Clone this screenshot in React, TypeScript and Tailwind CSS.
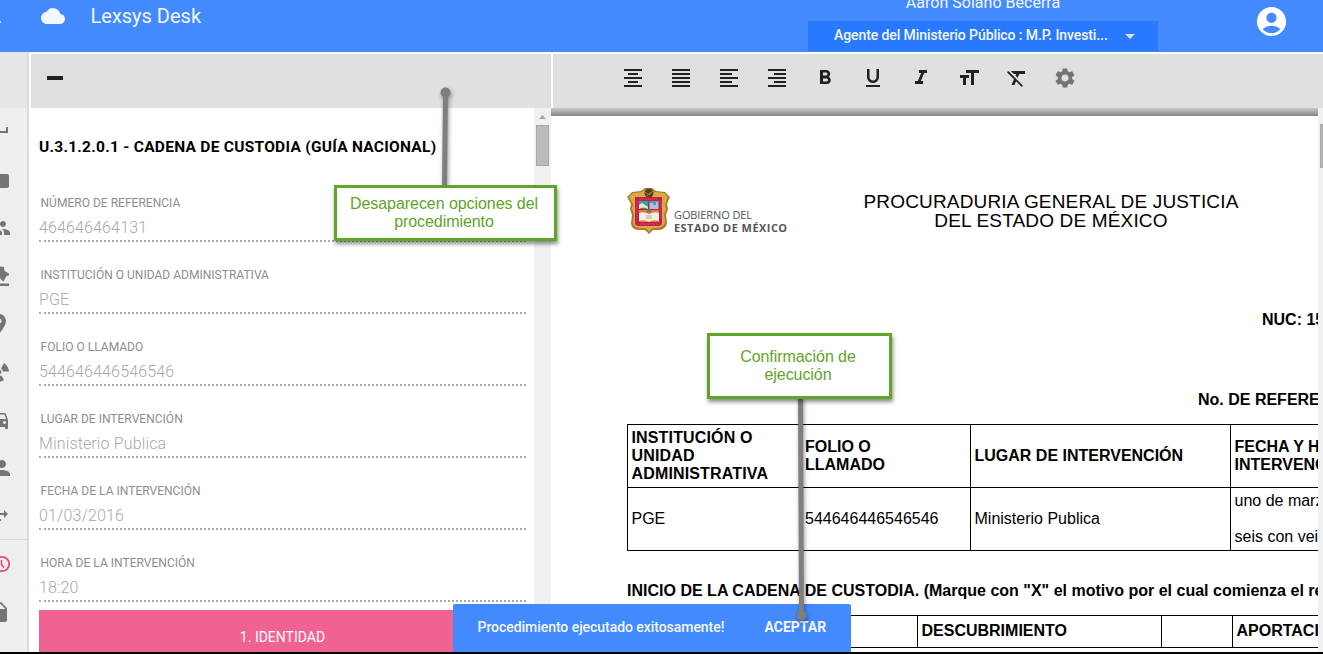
import React from "react";
import {
  MdAccountCircle, MdArrowDropDown, MdCloud, MdFormatAlignCenter, MdFormatAlignJustify, MdFormatAlignLeft,
  MdFormatAlignRight, MdFormatBold, MdFormatClear, MdFormatItalic, MdFormatSize, MdFormatUnderlined, MdSettings,
  MdPeople, MdPlace, MdDirectionsCar, MdPerson, MdSwapHoriz, MdInsertDriveFile, MdSpaceBar,
} from "react-icons/md";

const fields = [
  ["NÚMERO DE REFERENCIA", "464646464131"],
  ["INSTITUCIÓN O UNIDAD ADMINISTRATIVA", "PGE"],
  ["FOLIO O LLAMADO", "544646446546546"],
  ["LUGAR DE INTERVENCIÓN", "Ministerio Publica"],
  ["FECHA DE LA INTERVENCIÓN", "01/03/2016"],
  ["HORA DE LA INTERVENCIÓN", "18:20"],
];

const tools = [
  MdFormatAlignCenter, MdFormatAlignJustify, MdFormatAlignLeft, MdFormatAlignRight, MdFormatBold,
  MdFormatUnderlined, MdFormatItalic, MdFormatSize, MdFormatClear,
];

function Header() {
  return (
    <header className="flex h-[52px] shrink-0 overflow-hidden bg-[#448aff] text-[#f3f7ff]">
      <div className="flex w-[808px] items-start">
        <span className="mt-[21px] h-[2px] w-px bg-white/70" />
        <MdCloud className="ml-[40px] mt-[4px] size-[24px]" />
        <h1 className="ml-[25.5px] mt-[2px] text-[20px] leading-[28px]">Lexsys Desk</h1>
      </div>
      <div className="w-[350px]">
        <p className="-mt-[8px] h-[29px] text-center text-[16px] leading-[22px] tracking-[0.02px]">Aaron Solano Becerra</p>
        <div className="flex h-[30px] items-center bg-[#2979ff] pl-[26px] text-[14px] font-medium">
          <span className="-mt-[2px] w-[284px] whitespace-nowrap tracking-[-0.09px]">Agente del Ministerio Público : M.P. Investi...</span>
          <MdArrowDropDown className="size-[24px] text-[#dfe0e2]" />
        </div>
      </div>
      <MdAccountCircle className="ml-[96px] mt-[4px] size-[35px] text-white" />
    </header>
  );
}

function StampIcon() {
  return (
    <svg className="size-[24px]" viewBox="0 0 24 24" fill="currentColor">
      <path d="M4 19.500H22V22H4ZM13 2.500 17 3 17.500 7 22 9.500 22 11.500 19.500 12 16.500 17.500 14.500 16 13 14 8 17V8Z" />
    </svg>
  );
}

function RadialIcon() {
  return (
    <svg className="size-[24px]" viewBox="0 0 24 24" fill="currentColor">
      <circle cx="12.500" cy="12" r="2" />
      <path d="M17 3Q21.500 6 22 11.500H16Q15.700 9.500 14 8.500ZM14.500 15.500 17 20Q14 22 11 22L12.500 16Z" />
    </svg>
  );
}

function ClockIcon() {
  return (
    <svg className="size-[24px]" viewBox="0 0 24 24" fill="none" stroke="currentColor">
      <circle cx="15" cy="12" r="7.200" strokeWidth="1.800" />
      <path d="M14.500 8V12.500L17 15.500" strokeWidth="1.500" />
    </svg>
  );
}

function Sidebar() {
  return (
    <aside className="w-[29px] shrink-0 overflow-hidden border-r-2 border-[#dcdcdc] bg-[#eeeeee] text-[#757575]">
      <div className="h-[56px] w-[29px] bg-[#e7e7e7]" />
      <div className="-ml-[13px] flex w-[40px] flex-col">
        <div className="h-[48px] pl-[1px] pt-[10px]"><MdSpaceBar className="size-[24px]" /></div>
        <div className="h-[48px] pt-[18px]"><div className="h-[14px] w-[22px] rounded-[2px] bg-[#757575]" /></div>
        <div className="h-[48px] pt-[12px]"><MdPeople className="size-[24px]" /></div>
        <div className="h-[48px] pt-[12px]"><StampIcon /></div>
        <div className="h-[48px] pt-[12px]"><MdPlace className="size-[24px]" /></div>
        <div className="h-[48px] pt-[12px]"><RadialIcon /></div>
        <div className="h-[48px] pt-[12px]"><MdDirectionsCar className="size-[24px]" /></div>
        <div className="h-[48px] pl-[3px] pt-[12px]"><MdPerson className="size-[24px]" /></div>
        <div className="h-[48px] border-b border-[#dcdcdc] pt-[13px]"><MdSwapHoriz className="size-[24px]" /></div>
        <div className="h-[48px] pt-[12px] text-[#f0437f]"><ClockIcon /></div>
        <div className="h-[48px] pt-[12px]"><MdInsertDriveFile className="size-[24px]" /></div>
      </div>
    </aside>
  );
}

function FormPanel() {
  return (
    <section className="flex w-[522px] shrink-0 flex-col">
      <div className="ml-[2px] mt-[2px] h-[54px] shrink-0 bg-[#e0e0e0] pl-[16px] pt-[22px]">
        <div className="h-[4px] w-[16px] bg-[#212121]" />
      </div>
      <div className="flex min-h-0 flex-1 overflow-hidden">
        <div className="w-[505px] pl-[10px]">
          <h2 className="h-[86px] whitespace-nowrap pt-[29px] text-[15.500px] font-bold leading-[20px] tracking-[0.27px] text-black">
            U.3.1.2.0.1 - CADENA DE CUSTODIA (GUÍA NACIONAL)
          </h2>
          {fields.map(([label, value]) => (
            <div key={label} className="h-[72px] w-[487px]">
              <div className="h-[48px] border-b-2 border-dotted border-[#a9a9a9]">
                <div className="pl-[1.5px] pt-[1px] text-[12px] leading-[16px] tracking-[0.02px] text-[#8e8e8e]">{label}</div>
                <div className="pt-[7px] text-[16px] font-light leading-[20px] tracking-[0.14px] text-[#a8a8a8]">{value}</div>
              </div>
            </div>
          ))}
          <div className="-mt-[16px] h-[60px] w-[487px] bg-[#f06292] pt-[17px] text-center text-[14px] leading-[20px] text-white">
            1. IDENTIDAD
          </div>
        </div>
        <div className="flex w-[17px] flex-col items-center bg-[#f1f1f1]">
          <svg className="mt-[7px] h-[4px] w-[7px] shrink-0" viewBox="0 0 7 4"><path d="M3.5 0 7 4H0Z" fill="#a3a3a3" /></svg>
          <div className="mt-[6px] h-[41px] w-[13px] border border-[#a8a8a8] bg-[#bcbcbc]" />
        </div>
      </div>
    </section>
  );
}

function Crest() {
  return (
    <svg className="h-[48px] w-[44px]" viewBox="0 0 44 48">
      <path d="M0 10 5 5 14 4 18 1H25L29 4 38 5 43 10 40 17 41 22 39 28 40 36Q39 42 32 43H26L22 47 18 43H11Q4 42 4 36L5 28 3 22 4 17Z" fill="#a87b28" />
      <path d="M2 10 6 6 15 5 19 2H24L28 5 37 6 41 10 38 17 39 22 37 28 38 35Q37 40 31 41H25L22 45 19 41H12Q6 40 6 35L7 28 5 22 6 17Z" fill="#d9ab48" />
      <path d="M8 10H35V36Q35 39 31 39H12Q8 39 8 36Z" fill="#c91f46" />
      <circle cx="22" cy="6" r="4.5" fill="#54401c" />
      <path d="M18 5 22 8 26 4M20 9 24 5" stroke="#a08446" fill="none" />
      <path d="M12 14H21V22H12Z" fill="#39a0a8" /><path d="M22 14H32V22H22Z" fill="#5d93b5" />
      <path d="M12 22V18L15 16 21 20V22Z" fill="#e6ecd0" /><path d="M12 22Q16 19 21 22Z" fill="#3d9b42" />
      <path d="M23 22V16H26V18H29V15H31V22Z" fill="#a9c4d4" />
      <path d="M12 23H32V35H12Z" fill="#e27c36" />
      <path d="M12 26Q17 24 22 27 27 24 32 26V34Q26 32 22 35 17 32 12 34Z" fill="#f4efe4" />
      <path d="M19 29H25M19 31H25" stroke="#d7a45c" />
      <circle cx="22" cy="24" r="2" fill="#4386a0" />
      <path d="M13 37H31M10 14V32M34 14V32M13 12H31" stroke="#d84a5e" strokeDasharray="1 1" />
    </svg>
  );
}

function DocumentPanel() {
  return (
    <section className="flex w-[772px] shrink-0 flex-col">
      <div className="ml-[2px] mt-[2px] flex h-[54px] shrink-0 bg-[#e0e0e0] pl-[68.400px] pt-[12px] text-[#212121]">
        {tools.map((Icon, i) => (
          <div key={i} className="w-[48px]"><Icon className="size-[24px]" /></div>
        ))}
        <MdSettings className="size-[24px] text-[#757575]" />
      </div>
      <div className="flex flex-1 overflow-hidden">
        <div className="w-[767px] overflow-hidden font-['Liberation_Sans'] text-[16px] leading-[18px] text-black">
          <div className="h-[8px] bg-linear-to-b from-[#cacaca] to-[#868686]" />
          <div className="flex h-[184px] pl-[76px]">
            <div className="flex w-[207px] pt-[71px]">
              <Crest />
              <div className="ml-[3px] mt-[22px] flex flex-col gap-px whitespace-nowrap font-['Open_Sans'] text-[11px] leading-[12px] text-[#555]">
                <div className="tracking-[-0.1px]">GOBIERNO DEL</div>
                <div className="font-bold tracking-[0.45px]">ESTADO DE MÉXICO</div>
              </div>
            </div>
            <div className="w-[434px] pt-[76px] text-center text-[19px] leading-[19px] tracking-[0.16px]">
              <div className="whitespace-nowrap">PROCURADURIA GENERAL DE JUSTICIA</div>
              <div className="whitespace-nowrap">DEL ESTADO DE MÉXICO</div>
            </div>
          </div>
          <div className="h-[80px] whitespace-nowrap pl-[711px] pt-[11px] font-bold">NUC: 15</div>
          <div className="h-[44px] whitespace-nowrap pl-[647px] pt-[11px] font-bold">No. DE REFERENCIA</div>
          <div className="ml-[76px] grid w-[900px] grid-cols-[174px_169px_260px_296px] grid-rows-[63px_63px] border-l border-t border-black *:flex *:items-center *:border-b *:border-r *:border-black *:pl-[3.500px]">
            <div className="font-bold tracking-[0.15px]">INSTITUCIÓN O<br />UNIDAD<br />ADMINISTRATIVA</div>
            <div className="whitespace-nowrap font-bold"><span className="-ml-[0.5px]">FOLIO O<br />LLAMADO</span></div>
            <div className="whitespace-nowrap font-bold">LUGAR DE INTERVENCIÓN</div>
            <div className="whitespace-nowrap font-bold">FECHA Y HORA<br />INTERVENCIÓN</div>
            <div>PGE</div>
            <div><span className="-ml-[0.5px]">544646446546546</span></div>
            <div>Ministerio Publica</div>
            <div className="whitespace-nowrap">uno de marzo<br /><br />seis con veinte</div>
          </div>
          <p className="ml-[76px] h-[64px] whitespace-nowrap pt-[31px] font-bold tracking-[0.01px]">INICIO DE LA CADENA DE CUSTODIA. (Marque con "X" el motivo por el cual comienza el registro</p>
          <div className="ml-[76px] grid h-[33px] w-[900px] grid-cols-[290px_244px_71px_295px] border-l border-t border-black font-bold *:flex *:items-center *:border-b *:border-r *:border-black *:pb-[2px] *:pl-[3.500px]">
            <div /><div>DESCUBRIMIENTO</div><div /><div>APORTACIÓN</div>
          </div>
        </div>
        <div className="w-[5px] bg-[#f1f1f1] pl-[2px] pt-[16px]">
          <div className="h-[44px] border border-[#a8a8a8] bg-[#bcbcbc]" />
        </div>
      </div>
    </section>
  );
}

const callout =
  "absolute flex flex-col items-center border-[3px] border-[#5fa527] bg-white pr-[3px] text-center font-['Liberation_Sans'] text-[16px] leading-[18px] tracking-[-0.06px] text-[#5fa527] shadow-[1px_3px_4px_rgba(0,0,0,0.45)]";

export default function App() {
  return (
    <main className="relative flex h-[654px] w-[1323px] flex-col overflow-hidden bg-white font-['Roboto',sans-serif]">
      <Header />
      <div className="flex h-[600px] overflow-hidden">
        <Sidebar />
        <FormPanel />
        <DocumentPanel />
      </div>
      <div className="h-[2px] bg-black" />
      <div className="absolute left-[453px] top-[604px] flex h-[48px] w-[398px] items-center rounded-t-[2px] bg-[#448aff] pb-[2px] pl-[24.5px] text-[14px] font-medium text-[#f3f7ff]">
        <span className="w-[287px] whitespace-nowrap tracking-[-0.05px]">Procedimiento ejecutado exitosamente!</span>
        <span className="font-bold">ACEPTAR</span>
      </div>
      <svg className="absolute left-0 top-0 h-[654px] w-[1323px] drop-shadow-[1px_2px_2px_rgba(0,0,0,0.4)]" viewBox="0 0 1323 654">
        <path d="M445.5 92 444.5 188M800.5 397 801.5 616" stroke="#7f7f7f" strokeWidth="5" />
        <circle cx="445.5" cy="92.500" r="5" fill="#7f7f7f" />
        <circle cx="801.5" cy="615.500" r="5" fill="#7f7f7f" />
      </svg>
      <div className={`${callout} left-[334px] top-[185px] h-[56px] w-[223px] pt-[7px]`}>
        <div className="whitespace-nowrap">Desaparecen opciones del</div><div>procedimiento</div>
      </div>
      <div className={`${callout} left-[707px] top-[333px] h-[66px] w-[185px] pt-[12px]`}>
        <div className="whitespace-nowrap">Confirmación de</div><div>ejecución</div>
      </div>
    </main>
  );
}
